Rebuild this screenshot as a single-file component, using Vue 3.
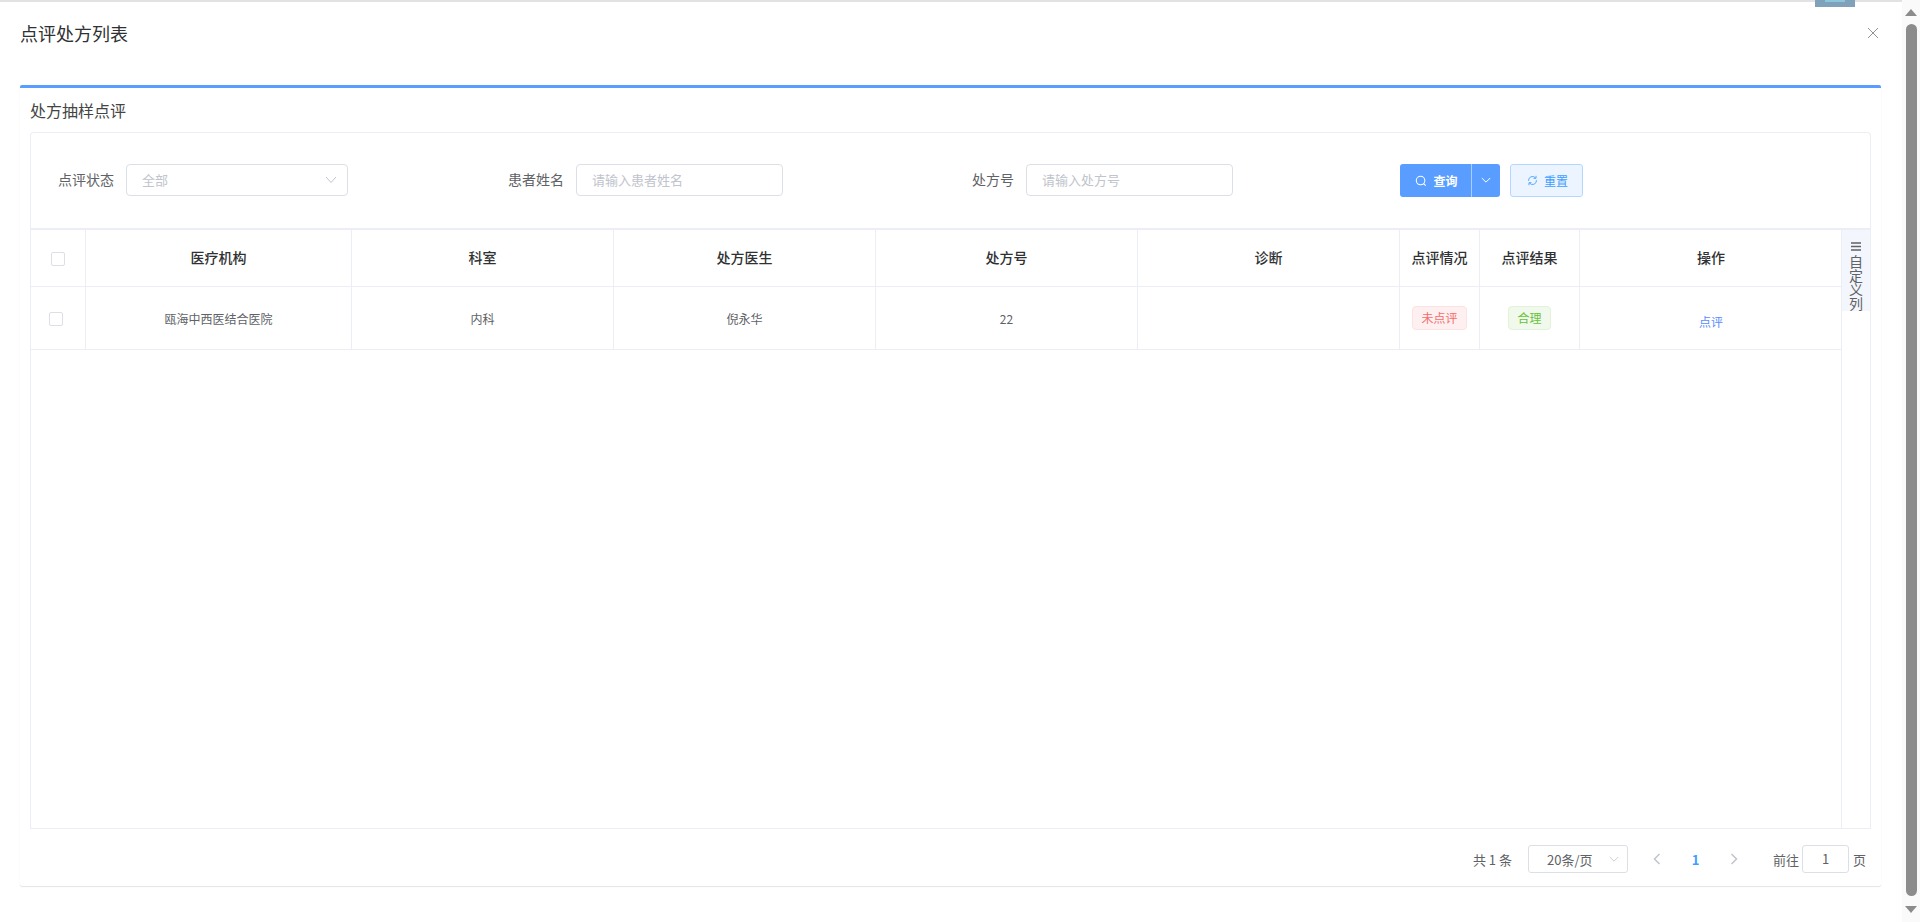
<template>
  <div class="page">
    <div class="peek"><span></span></div>
    <div class="dialog">
      <header class="dialog-header">
        <span class="dialog-title">点评处方列表</span>
        <svg class="close" viewBox="0 0 12 12" width="12" height="12">
          <path d="M1 1l10 10M11 1L1 11" stroke="#909399" stroke-width="1" fill="none" />
        </svg>
      </header>

      <section class="card">
        <h3 class="section-title">处方抽样点评</h3>

        <div class="search-box">
          <label class="form-label first">点评状态</label>
          <div class="control select">
            <span class="placeholder">全部</span>
            <svg class="arrow" viewBox="0 0 12 8" width="12" height="8">
              <path d="M1 1l5 5.5L11 1" stroke="#c0c4cc" stroke-width="1" fill="none" />
            </svg>
          </div>
          <label class="form-label second">患者姓名</label>
          <div class="control input-name"><span class="placeholder">请输入患者姓名</span></div>
          <label class="form-label third">处方号</label>
          <div class="control input-name"><span class="placeholder">请输入处方号</span></div>

          <div class="btn-query">
            <span class="btn-main">
              <svg viewBox="0 0 14 14" width="12" height="12">
                <circle cx="6.5" cy="6.5" r="5" stroke="#fff" stroke-width="1.2" fill="none" />
                <path d="M10 10l2.5 2.5" stroke="#fff" stroke-width="1.2" />
              </svg>
              查询
            </span>
            <span class="btn-drop">
              <svg viewBox="0 0 12 8" width="10" height="7">
                <path d="M1 1l5 5 5-5" stroke="#fff" stroke-width="1.2" fill="none" />
              </svg>
            </span>
          </div>
          <div class="btn-reset">
            <svg viewBox="0 0 14 14" width="11" height="11">
              <path d="M2 7.500a5 5 0 0 1 8.800-3.800M12 6.500a5 5 0 0 1-8.800 3.800" stroke="#409eff" stroke-width="1.1" fill="none" />
              <path d="M11.500 1v3.200H8.300M2.500 13V9.800h3.200" stroke="#409eff" stroke-width="1.1" fill="none" />
            </svg>
            重置
          </div>
        </div>

        <div class="table-wrap">
          <div class="table-main">
            <div class="table-row table-head">
              <div class="cell check-head"><i class="checkbox"></i></div>
              <div v-for="col in columns" :key="col" class="cell">{{ col }}</div>
            </div>
            <div v-for="row in rows" :key="row.no" class="table-row table-body">
              <div class="cell check-body"><i class="checkbox"></i></div>
              <div class="cell">{{ row.org }}</div>
              <div class="cell">{{ row.dept }}</div>
              <div class="cell">{{ row.doctor }}</div>
              <div class="cell">{{ row.no }}</div>
              <div class="cell">{{ row.diagnosis }}</div>
              <div class="cell"><span class="tag tag-red">{{ row.status }}</span></div>
              <div class="cell"><span class="tag tag-green">{{ row.result }}</span></div>
              <div class="cell"><a class="link">点评</a></div>
            </div>
          </div>
          <aside class="custom-col">
            <div class="custom-btn">
              <svg viewBox="0 0 10 9" width="10" height="9">
                <path d="M0 1h10M0 4.500h10M0 8h10" stroke="#606266" stroke-width="1.300" />
              </svg>
              <span class="custom-text">自定义列</span>
            </div>
          </aside>
        </div>

        <div class="pager">
          <span>共 1 条</span>
          <div class="pager-size">
            <span>20条/页</span>
            <svg viewBox="0 0 12 8" width="10" height="7">
              <path d="M1 1l5 5 5-5" stroke="#c0c4cc" stroke-width="1" fill="none" />
            </svg>
          </div>
          <svg class="pager-prev" viewBox="0 0 8 12" width="8" height="12">
            <path d="M6.500 1L1.500 6l5 5" stroke="#c0c4cc" stroke-width="1.500" fill="none" />
          </svg>
          <b class="pager-num">1</b>
          <svg class="pager-next" viewBox="0 0 8 12" width="8" height="12">
            <path d="M1.500 1l5 5-5 5" stroke="#c0c4cc" stroke-width="1.500" fill="none" />
          </svg>
          <span class="pager-goto">前往</span>
          <div class="pager-input">1</div>
          <span class="pager-unit">页</span>
        </div>
      </section>
    </div>

    <div class="scrollbar">
      <i class="sb-up"></i>
      <i class="sb-thumb"></i>
      <i class="sb-down"></i>
    </div>
  </div>
</template>

<script setup>
const columns = ['医疗机构', '科室', '处方医生', '处方号', '诊断', '点评情况', '点评结果', '操作'];

const rows = [
  {
    org: '瓯海中西医结合医院',
    dept: '内科',
    doctor: '倪永华',
    no: '22',
    diagnosis: '',
    status: '未点评',
    result: '合理',
  },
];
</script>

<style>
html,
body {
  margin: 0;
  background: #fff;
  overflow: hidden;
}
</style>

<style scoped>
.page {
  display: flex;
  height: 922px;
  position: relative;
  font-family: "Noto Sans CJK SC", "Noto Sans", sans-serif;
  color: #606266;
  background: #fff;
}

.peek {
  position: absolute;
  left: 1815px;
  top: 0;
  width: 40px;
  height: 7px;
  background: #7fa2ba;
  z-index: 2;
}

.peek span {
  display: block;
  width: 20px;
  height: 2px;
  margin: 0 auto;
  background: #8cc6dc;
}

.dialog {
  width: 1902px;
  border-top: 2px solid #e2e2e2;
  box-sizing: border-box;
}

.dialog-header {
  display: flex;
  align-items: center;
  justify-content: space-between;
  height: 83px;
  padding: 0 23px 21px 20px;
  box-sizing: border-box;
}

.dialog-title {
  font-size: 18px;
  color: #303133;
}

.close {
  display: block;
}

.card {
  display: flex;
  flex-direction: column;
  width: 1861px;
  height: 801px;
  margin-left: 20px;
  padding: 0 10px;
  box-sizing: border-box;
  border-top: 3px solid #589dff;
  border-radius: 2px;
  box-shadow: 0 1px 1px rgba(0, 0, 0, 0.1), 0 0 1px rgba(0, 0, 0, 0.05);
  background: #fff;
}

.section-title {
  margin: 0;
  height: 44px;
  line-height: 44px;
  font-size: 16px;
  font-weight: 400;
  color: #444;
}

.search-box {
  display: flex;
  align-items: center;
  height: 96px;
  padding-bottom: 2px;
  box-sizing: border-box;
  border: 1px solid #ebeef5;
  border-bottom: none;
  border-radius: 4px 4px 0 0;
}

.form-label {
  font-size: 14px;
  color: #606266;
  margin-right: 12px;
  padding-bottom: 2px;
}

.form-label.first {
  margin-left: 27px;
}

.form-label.second {
  margin-left: 160px;
}

.form-label.third {
  margin-left: 189px;
}

.control {
  display: flex;
  align-items: center;
  justify-content: space-between;
  height: 32px;
  padding: 0 15px 1px;
  box-sizing: border-box;
  border: 1px solid #dcdfe6;
  border-radius: 4px;
  font-size: 13px;
}

.select {
  width: 222px;
}

.select .arrow {
  margin: 1px -5px 0 0;
}

.input-name {
  width: 207px;
}

.placeholder {
  color: #c0c4cc;
}

.btn-query {
  display: flex;
  height: 33px;
  margin-left: 167px;
  margin-top: 2px;
  border-radius: 3px;
  background: #589dff;
  color: #fff;
  font-size: 12px;
  font-weight: 700;
  overflow: hidden;
}

.btn-main {
  display: flex;
  align-items: center;
  justify-content: center;
  gap: 6px;
  width: 72px;
  padding-left: 2px;
  box-sizing: border-box;
  border-right: 1px solid #a9cdff;
}

.btn-drop {
  display: flex;
  align-items: center;
  justify-content: center;
  width: 28px;
}

.btn-reset {
  display: flex;
  align-items: center;
  justify-content: center;
  gap: 6px;
  width: 73px;
  height: 33px;
  margin-left: 10px;
  margin-top: 1px;
  padding-left: 2px;
  box-sizing: border-box;
  border: 1px solid #b3d8ff;
  border-radius: 3px;
  background: #ecf5ff;
  color: #409eff;
  font-size: 12px;
}

.table-wrap {
  display: flex;
  height: 601px;
  box-sizing: border-box;
  border: 1px solid #ebeef5;
  border-top: 2px solid #ebeef5;
}

.table-main {
  flex: 1;
  min-width: 0;
}

.table-row {
  display: grid;
  grid-template-columns: 55px 266px 262px 262px 262px 262px 80px 100px 262px;
  border-bottom: 1px solid #ebeef5;
  box-sizing: border-box;
}

.table-head {
  height: 57px;
  font-size: 14px;
  font-weight: 500;
  color: #303133;
}

.table-head .cell {
  padding-bottom: 2px;
}

.table-body {
  height: 63px;
  font-size: 12px;
  color: #606266;
}

.cell {
  display: flex;
  align-items: center;
  justify-content: center;
  border-right: 1px solid #ebeef5;
  box-sizing: border-box;
}

.cell:last-child {
  border-right: none;
}

.check-body {
  padding: 2px 4px 0 0;
}

.table-head .check-head {
  padding: 2px 0 0;
}

.checkbox {
  display: block;
  width: 14px;
  height: 14px;
  box-sizing: border-box;
  border: 1px solid #dcdfe6;
  border-radius: 2px;
  background: #fff;
}

.tag {
  display: inline-block;
  height: 24px;
  line-height: 22px;
  padding: 0 8px;
  box-sizing: border-box;
  border-radius: 4px;
  border: 1px solid;
  font-size: 12px;
}

.tag-red {
  color: #f56c6c;
  background: #fef0f0;
  border-color: #fde2e2;
}

.tag-green {
  color: #67c23a;
  background: #f0f9eb;
  border-color: #e1f3d8;
}

.link {
  margin-top: 6px;
  color: #5a8cff;
  font-size: 12px;
}

.custom-col {
  width: 28px;
  border-left: 1px solid #ebeef5;
}

.custom-btn {
  display: flex;
  flex-direction: column;
  align-items: center;
  padding-top: 12px;
  box-sizing: border-box;
  background: #f3f7fd;
  color: #606266;
}

.custom-btn svg {
  flex: none;
  margin-bottom: 4px;
}

.custom-text {
  flex: none;
  writing-mode: vertical-rl;
  white-space: nowrap;
  font-size: 14px;
  line-height: 14px;
}

.pager {
  display: flex;
  align-items: center;
  justify-content: flex-end;
  height: 56px;
  padding-top: 4px;
  box-sizing: border-box;
  font-size: 13px;
  color: #606266;
}

.pager-size {
  display: flex;
  align-items: center;
  justify-content: space-between;
  width: 100px;
  height: 28px;
  margin-left: 16px;
  padding: 0 8px 0 18px;
  box-sizing: border-box;
  border: 1px solid #dcdfe6;
  border-radius: 3px;
}

.pager-prev {
  margin-left: 25px;
}

.pager-num {
  width: 13px;
  margin-left: 28px;
  color: #409eff;
  text-align: center;
}

.pager-next {
  margin-left: 28px;
}

.pager-goto {
  margin-left: 35px;
}

.pager-input {
  width: 47px;
  height: 28px;
  line-height: 26px;
  margin-left: 3px;
  box-sizing: border-box;
  border: 1px solid #dcdfe6;
  border-radius: 3px;
  text-align: center;
}

.pager-unit {
  margin: 0 5px 0 4px;
}

.scrollbar {
  position: relative;
  flex: 1;
  display: flex;
  flex-direction: column;
  align-items: center;
  background: #fafafa;
}

.sb-up,
.sb-down {
  display: block;
  width: 0;
  height: 0;
  border-left: 6px solid transparent;
  border-right: 6px solid transparent;
}

.sb-up {
  margin-top: 9px;
  border-bottom: 7px solid #8c8c8c;
}

.sb-thumb {
  display: block;
  width: 11px;
  height: 872px;
  margin-top: 8px;
  border-radius: 6px;
  background: #8c8c8c;
}

.sb-down {
  margin-top: 10px;
  border-top: 7px solid #8c8c8c;
}
</style>
